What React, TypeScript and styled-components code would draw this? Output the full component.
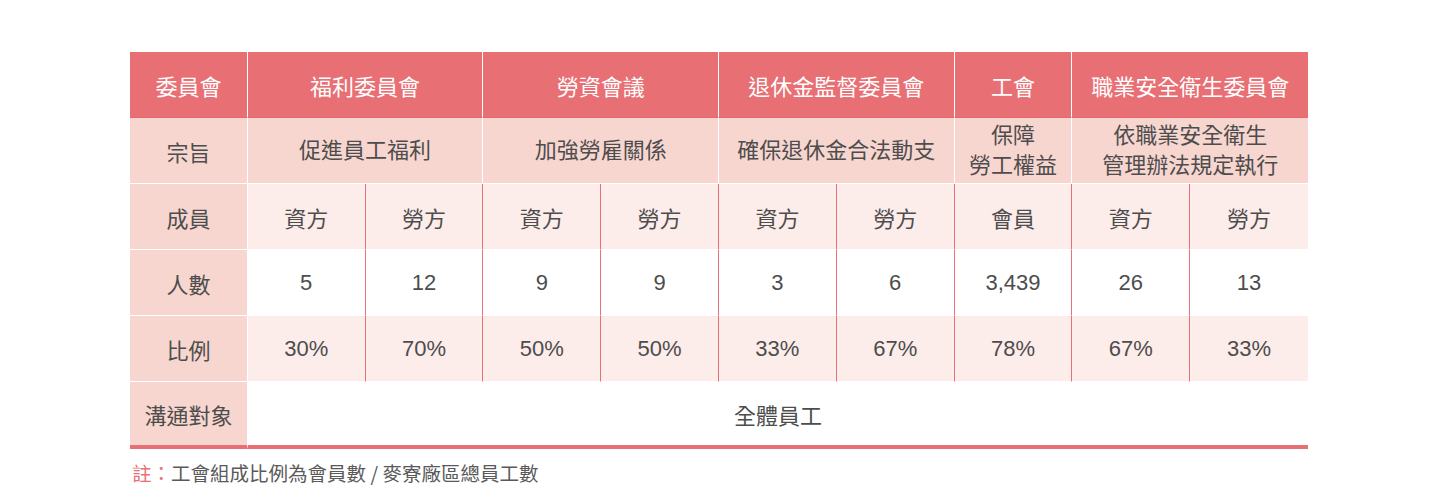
import React from "react";
import styled, { createGlobalStyle } from "styled-components";

const GlobalStyle = createGlobalStyle`
  body {
    margin: 0;
    background: #ffffff;
    font-family: "Liberation Sans", "Noto Sans CJK TC", sans-serif;
  }
`;

const Wrapper = styled.div`
  width: 1178px;
  margin: 52px 0 0 130px;
`;

const Table = styled.table`
  width: 100%;
  table-layout: fixed;
  border-collapse: separate;
  border-spacing: 0;
  font-size: 22px;
  color: #4d4d4d;
  text-align: center;
`;

const HeadCell = styled.th<{ $last?: boolean }>`
  height: 65px;
  padding: 0;
  background: #e86f74;
  color: #ffffff;
  font-weight: 400;
  border-right: ${(p) => (p.$last ? "none" : "1px solid #ffffff")};
  border-bottom: 1px solid #e4686e;
`;

const LabelCell = styled.td<{ $end?: boolean }>`
  height: ${(p) => (p.$end ? "63px" : "65px")};
  padding: 0;
  background: #f8d6d0;
  border-right: 1px solid #ffffff;
  border-bottom: ${(p) => (p.$end ? "4px solid #e86f74" : "1px solid #ffffff")};
`;

const AimCell = styled.td<{ $last?: boolean }>`
  height: 65px;
  padding: 0;
  line-height: 30px;
  background: #f8d6d0;
  border-right: ${(p) => (p.$last ? "none" : "1px solid #ffffff")};
  border-bottom: 1px solid #ffffff;
`;

const DataCell = styled.td<{ $tint?: boolean; $last?: boolean }>`
  height: 65px;
  padding: 0;
  background: ${(p) => (p.$tint ? "#fcecea" : "#ffffff")};
  border-right: ${(p) => (p.$last ? "none" : "1px solid #e8707a")};
  border-bottom: 1px solid #ffffff;
`;

const AudienceCell = styled.td`
  height: 63px;
  padding: 0;
  background: #ffffff;
  border-bottom: 4px solid #e86f74;
`;

const Note = styled.p`
  margin: 0;
  padding: 9px 0 0 2px;
  font-size: 19.5px;
  line-height: 29px;
  color: #5a5a5a;
  font-family: "Noto Sans CJK TC", sans-serif;
`;

const NoteMark = styled.span`
  color: #e86f74;
`;

const committees = [
  { name: "福利委員會", span: 2, aim: ["促進員工福利"] },
  { name: "勞資會議", span: 2, aim: ["加強勞雇關係"] },
  { name: "退休金監督委員會", span: 2, aim: ["確保退休金合法動支"] },
  { name: "工會", span: 1, aim: ["保障", "勞工權益"] },
  { name: "職業安全衛生委員會", span: 2, aim: ["依職業安全衛生", "管理辦法規定執行"] },
];

const members = ["資方", "勞方", "資方", "勞方", "資方", "勞方", "會員", "資方", "勞方"];
const counts = ["5", "12", "9", "9", "3", "6", "3,439", "26", "13"];
const ratios = ["30%", "70%", "50%", "50%", "33%", "67%", "78%", "67%", "33%"];

const DataRow = ({ label, values, tint }: { label: string; values: string[]; tint?: boolean }) => (
  <tr>
    <LabelCell>{label}</LabelCell>
    {values.map((v, i) => (
      <DataCell key={i} $tint={tint} $last={i === values.length - 1}>
        {v}
      </DataCell>
    ))}
  </tr>
);

const App = () => {
  return (
    <>
      <GlobalStyle />
      <Wrapper>
        <Table>
          <colgroup>
            {Array.from({ length: 10 }).map((_, i) => (
              <col key={i} style={{ width: "10%" }} />
            ))}
          </colgroup>
          <thead>
            <tr>
              <HeadCell>委員會</HeadCell>
              {committees.map((c, i) => (
                <HeadCell key={c.name} colSpan={c.span} $last={i === committees.length - 1}>
                  {c.name}
                </HeadCell>
              ))}
            </tr>
          </thead>
          <tbody>
            <tr>
              <LabelCell>宗旨</LabelCell>
              {committees.map((c, i) => (
                <AimCell key={c.name} colSpan={c.span} $last={i === committees.length - 1}>
                  {c.aim.map((line, j) => (
                    <React.Fragment key={j}>
                      {j > 0 && <br />}
                      {line}
                    </React.Fragment>
                  ))}
                </AimCell>
              ))}
            </tr>
            <DataRow label="成員" values={members} tint />
            <DataRow label="人數" values={counts} />
            <DataRow label="比例" values={ratios} tint />
            <tr>
              <LabelCell $end>溝通對象</LabelCell>
              <AudienceCell colSpan={9}>全體員工</AudienceCell>
            </tr>
          </tbody>
        </Table>
        <Note>
          <NoteMark>註：</NoteMark>工會組成比例為會員數 / 麥寮廠區總員工數
        </Note>
      </Wrapper>
    </>
  );
};

export default App;
